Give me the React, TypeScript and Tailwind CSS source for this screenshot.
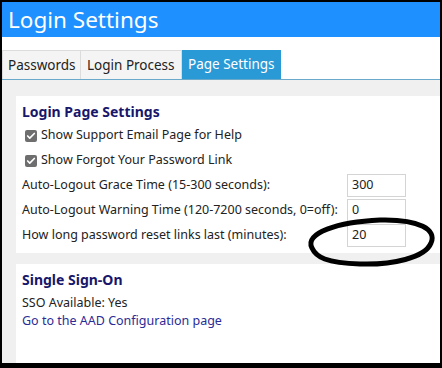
import { Check } from 'lucide-react';

const font = { fontFamily: '"Noto Sans", "Open Sans", sans-serif' };

const fields = [
  { label: 'Auto-Logout Grace Time (15-300 seconds):', value: '300' },
  { label: 'Auto-Logout Warning Time (120-7200 seconds, 0=off):', value: '0' },
  { label: 'How long password reset links last (minutes):', value: '20' },
];

function CheckRow({ label }: { label: string }) {
  return (
    <label className="flex h-[25px] items-center gap-[4px] pl-[3px]">
      <span className="flex h-[12px] w-[12px] items-center justify-center rounded-[2px] bg-[#6e6e6e]">
        <Check className="h-[10px] w-[10px] text-white" strokeWidth={4} />
      </span>
      <span>{label}</span>
    </label>
  );
}

export default function App() {
  return (
    <div
      className="relative h-[368px] w-[442px] bg-black px-[2px] pt-[2px] pb-[5px] text-[12.5px] text-[#222]"
      style={font}
    >
      <div className="flex h-full flex-col bg-white">
        <div className="h-[35px] bg-[#1e90ff] pl-[6px] text-[22.5px] leading-[35px] text-white">
          Login Settings
        </div>

        <div className="mt-[13px] flex h-[30px] border-b border-[#6aa9c9] text-[13.5px]">
          <div className="flex w-[79px] items-center border border-b-0 border-[#dcdcdc] bg-[#f4f4f4] pl-[5px]">
            Passwords
          </div>
          <div className="flex w-[101px] items-center border border-b-0 border-l-0 border-[#dcdcdc] bg-[#f4f4f4] pl-[6px]">
            Login Process
          </div>
          <div className="flex w-[99px] items-center bg-[#2a9ad6] pl-[6px] text-white">Page Settings</div>
        </div>

        <div className="flex flex-1 flex-col gap-[11px] bg-[#f0f0f0] pt-[16px] pl-[14px]">
          <section className="bg-white px-[6px] pt-[6px] pb-[5px]">
            <h2 className="h-[20px] text-[14px] leading-[20px] font-bold text-[#17176b]">
              Login Page Settings
            </h2>
            <div className="mt-[1px]">
              <CheckRow label="Show Support Email Page for Help" />
              <CheckRow label="Show Forgot Your Password Link" />
              {fields.map((f) => (
                <div key={f.label} className="flex h-[25px] items-center">
                  <span className="w-[325px] whitespace-nowrap">{f.label}</span>
                  <div className="flex h-[23px] w-[59px] items-center border border-[#d4d4d4] bg-white pl-[4px]">
                    {f.value}
                  </div>
                </div>
              ))}
            </div>
          </section>

          <section className="flex-1 bg-white px-[6px] pt-[6px] leading-[18px]">
            <h2 className="h-[20px] text-[14px] leading-[20px] font-bold text-[#17176b]">
              Single Sign-On
            </h2>
            <div className="mt-[4px]">SSO Available: Yes</div>
            <a className="text-[#2b2b96]">Go to the AAD Configuration page</a>
          </section>
        </div>
      </div>

      <svg className="pointer-events-none absolute top-0 left-0" width="442" height="368">
        <path
          d="M 312 248 C 304 233, 338 222, 380 220 C 420 219, 437 230, 431 243 C 425 258, 392 265, 360 264 C 326 263, 316 257, 312 248 Z"
          fill="none"
          stroke="black"
          strokeWidth="5"
        />
      </svg>
    </div>
  );
}
